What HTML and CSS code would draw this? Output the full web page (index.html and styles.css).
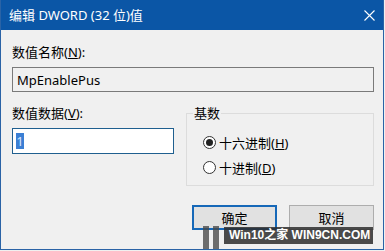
FILE: index.html
```html
<!DOCTYPE html>
<html lang="zh-CN">
<head>
<meta charset="utf-8">
<title>编辑 DWORD (32 位)值</title>
<link rel="stylesheet" href="styles.css">
</head>
<body>
<div class="window">
  <div class="titlebar">
    <span class="title">编辑 DWORD (32 位)值</span>
    <svg class="close" width="11" height="11" viewBox="0 0 11 11"><path d="M0.5 0.5 L10.5 10.5 M10.5 0.5 L0.5 10.5" stroke="#fff" stroke-width="1.1" fill="none"/></svg>
  </div>
  <div class="content">
    <div class="label">数值名称(<u>N</u>):</div>
    <div class="field readonly">MpEnablePus</div>
    <div class="row">
      <div class="col-left">
        <div class="label">数值数据(<u>V</u>):</div>
        <div class="field focus"><span class="sel">1</span></div>
      </div>
      <fieldset class="group">
        <legend>基数</legend>
        <div class="radio"><span class="dot checked"></span><span>十六进制(<u>H</u>)</span></div>
        <div class="radio"><span class="dot"></span><span>十进制(<u>D</u>)</span></div>
      </fieldset>
    </div>
    <div class="buttons">
      <div class="btn default">确定</div>
      <div class="btn">取消</div>
    </div>
  </div>
  <div class="watermark">
    <span class="bar"></span><span class="bar"></span>
    <span class="wm-text">Win10之家 WIN9CN.COM</span>
  </div>
</div>
</body>
</html>
```

FILE: styles.css
```css
* { box-sizing: border-box; }
html, body { margin: 0; padding: 0; background: #f0f0f0; }
body {
  font-family: "Noto Sans", "Noto Sans CJK SC", sans-serif;
  font-size: 13px;
  color: #000;
}
.window {
  position: relative;
  width: 384px;
  height: 250px;
  background: #f0f0f0;
  border: 1px solid #2a63a6;
  border-top: none;
  overflow: hidden;
}
.titlebar {
  height: 30px;
  margin: 0 -1px;
  background: #0b56a6;
  color: #fff;
  display: flex;
  align-items: center;
  justify-content: space-between;
  padding: 0 9px 0 9px;
}
.title { font-size: 13px; line-height: 16px; }
.close { display: block; }
.content {
  padding: 15px 9px 0 11px;
}
.label { line-height: 14px; height: 14px; font-size: 13px; }
.field {
  margin-top: 8px;
  height: 25px;
  border: 1px solid #7a7a7a;
  padding: 0 4px;
  display: flex;
  align-items: center;
  line-height: 16px;
}
.readonly { background: #f0f0f0; }
.focus { background: #fff; border-color: #1f5f8f; height: 26px; padding-left: 3px; }
.sel {
  background: #3b7fd4;
  color: #d6e8ff;
  display: inline-block;
  width: 8px;
  height: 16px;
  line-height: 16px;
  text-align: center;
}
.row {
  margin-top: 14px;
  display: flex;
  gap: 12px;
}
.col-left { width: 162px; }
.group {
  margin: 0;
  flex: 1;
  height: 80px;
  border: 1px solid #dcdcdc;
  padding: 15px 6px 0 16px;
  min-width: 0;
}
.group legend {
  padding: 0 1px;
  margin-left: -10px;
  line-height: 14px;
  font-size: 13px;
}
.radio {
  display: flex;
  align-items: center;
  height: 14px;
  gap: 3px;
  margin-bottom: 11px;
}
.dot {
  width: 13px;
  height: 13px;
  border: 1px solid #333;
  border-radius: 50%;
  background: #fff;
  display: flex;
  align-items: center;
  justify-content: center;
  flex: none;
}
.dot.checked::after {
  content: "";
  width: 7px;
  height: 7px;
  border-radius: 50%;
  background: #222;
}
.buttons {
  margin-top: 19px;
  display: flex;
  justify-content: flex-end;
  gap: 12px;
}
.btn {
  width: 85px;
  height: 25px;
  background: #e1e1e1;
  border: 1px solid #adadad;
  display: flex;
  align-items: center;
  justify-content: center;
  font-size: 13px;
}
.btn.default { border: 2px solid #1668b8; }
.watermark {
  position: absolute;
  left: 202px;
  top: 226px;
  display: flex;
  align-items: flex-start;
}
.bar {
  width: 6px;
  height: 25px;
  background: rgba(70, 70, 70, 0.78);
  margin-right: 4px;
}
.wm-text {
  margin-left: 1px;
  margin-top: 1px;
  height: 17px;
  padding: 0 3px 0 5px;
  background: rgba(45, 45, 45, 0.85);
  color: #fff;
  font-family: "Liberation Sans", "Noto Sans CJK SC", sans-serif;
  font-weight: bold;
  font-size: 12px;
  line-height: 17px;
  white-space: nowrap;
}
```
